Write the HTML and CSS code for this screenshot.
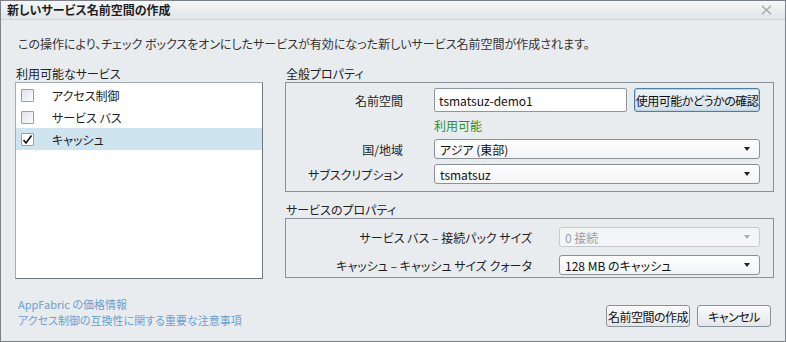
FILE: index.html
```html
<!DOCTYPE html>
<html>
<head>
    <title>新しいサービス名前空間の作成</title>
    <link rel="stylesheet" href="styles.css">
</head>
<body>
    <div class="dialog">
        <div class="titlebar">
            <span class="title">新しいサービス名前空間の作成</span>
            <svg class="close" width="11" height="10" viewBox="0 0 11 10">
                <path d="M1 1 L10 9 M10 1 L1 9" stroke="#a4a9ae" stroke-width="1.4" fill="none"/>
                <path d="M1 1 h2 M8 1 h2 M1 9 h2 M8 9 h2" stroke="#b8bcc0" stroke-width="1" fill="none"/>
            </svg>
        </div>
        <div class="content">
            <p class="intro">この操作により、チェック ボックスをオンにしたサービスが有効になった新しいサービス名前空間が作成されます。</p>
            <div class="columns">
                <div class="services">
                    <div class="caption">利用可能なサービス</div>
                    <ul class="service-list">
                        <li><span class="check"></span>アクセス制御</li>
                        <li><span class="check"></span>サービス バス</li>
                        <li class="selected">
                            <span class="check">
                                <svg width="11" height="11" viewBox="0 0 11 11"><path d="M1.5 6 L4 9 L9.5 1.5" stroke="#111" stroke-width="1.6" fill="none"/></svg>
                            </span>キャッシュ
                        </li>
                    </ul>
                </div>
                <div class="properties">
                    <div class="caption">全般プロパティ</div>
                    <div class="group general">
                        <div class="row">
                            <label class="label" for="ns">名前空間</label>
                            <div class="field">
                                <input type="text" id="ns" class="text-input" value="tsmatsuz-demo1">
                                <button class="button check-button">使用可能かどうかの確認</button>
                            </div>
                        </div>
                        <div class="row status">
                            <span class="label"></span>
                            <span class="available">利用可能</span>
                        </div>
                        <div class="row">
                            <span class="label">国/地域</span>
                            <div class="select">アジア (東部)</div>
                        </div>
                        <div class="row">
                            <span class="label">サブスクリプション</span>
                            <div class="select">tsmatsuz</div>
                        </div>
                    </div>
                    <div class="caption second">サービスのプロパティ</div>
                    <div class="group service">
                        <div class="row">
                            <span class="label">サービス バス – 接続パック サイズ</span>
                            <div class="select disabled">0 接続</div>
                        </div>
                        <div class="row">
                            <span class="label">キャッシュ – キャッシュ サイズ クォータ</span>
                            <div class="select">128 MB のキャッシュ</div>
                        </div>
                    </div>
                </div>
            </div>
            <div class="footer">
                <div class="links">
                    <a href="#">AppFabric の価格情報</a>
                    <a href="#">アクセス制御の互換性に関する重要な注意事項</a>
                </div>
                <div class="actions">
                    <button class="button create">名前空間の作成</button>
                    <button class="button cancel">キャンセル</button>
                </div>
            </div>
        </div>
    </div>
</body>
</html>
```

FILE: styles.css
```css
body {
    margin: 0;
    font-family: "Noto Sans CJK JP", sans-serif;
    font-size: 12px;
    font-feature-settings: "palt";
    color: #1e1e1e;
    background: #e9ecef;
}
.dialog {
    width: 786px;
    height: 342px;
    box-sizing: border-box;
    border: 1px solid #7b8186;
    background: #e9ecef;
}
.titlebar {
    height: 18px;
    display: flex;
    align-items: center;
    justify-content: space-between;
    padding: 0 13px 0 6px;
    background: linear-gradient(#f6f7f8, #e1e5e9);
    border-bottom: 1px solid #cdd3d8;
}
.title {
    font-weight: bold;
    line-height: 16px;
}
.close {
    display: block;
}
.content {
    padding: 0 11px 0 14px;
}
.intro {
    margin: 16px 0 0 3px;
    line-height: 16px;
    color: #333;
}
.columns {
    display: flex;
    gap: 22px;
    margin-top: 14px;
}
.services {
    width: 248px;
}
.properties {
    flex: 1;
}
.caption {
    line-height: 16px;
    padding-left: 1px;
    color: #222;
}
.caption.second {
    margin-top: 10px;
}
.service-list {
    list-style: none;
    margin: 0;
    padding: 1px 0 0;
    height: 197px;
    box-sizing: border-box;
    background: #fff;
    border: 1px solid #a5acb2;
    border-right-color: #6f767c;
    border-bottom-color: #6f767c;
}
.service-list li {
    height: 22px;
    display: flex;
    align-items: center;
    padding-left: 5px;
}
.service-list li.selected {
    background: #cee4ee;
}
.check {
    width: 13px;
    height: 13px;
    box-sizing: border-box;
    margin-right: 18px;
    border: 1px solid #959fa8;
    border-radius: 1px;
    background: linear-gradient(135deg, #dfe4e9, #fbfcfd);
    display: flex;
    align-items: center;
    justify-content: center;
}
.selected .check {
    background: #fff;
}
.check svg {
    display: block;
}
.group {
    border: 1px solid #8a9096;
    padding: 5px 13px 7px 0;
}
.group.service {
    padding: 8px 13px 2px 0;
}
.row {
    display: flex;
    align-items: center;
}
.label {
    width: 117px;
    margin-right: 31px;
    text-align: right;
    flex-shrink: 0;
}
.service .label {
    width: 246px;
    margin-right: 27px;
}
.general .row + .row {
    margin-top: 5px;
}
.general .row.status {
    height: 27px;
    margin-top: 0;
}
.general .row.status + .row {
    margin-top: 0;
}
.service .row + .row {
    margin-top: 8px;
}
.available {
    color: #2d912d;
}
.field {
    display: flex;
    gap: 7px;
    flex: 1;
}
.text-input {
    width: 193px;
    height: 24px;
    box-sizing: border-box;
    padding: 0 4px;
    border: 1px solid #8e969d;
    border-radius: 2px;
    font: inherit;
    color: #111;
    background: #fff;
}
.button {
    font: inherit;
    font-feature-settings: "palt";
    letter-spacing: -0.5px;
    white-space: nowrap;
    color: #111;
    height: 22px;
    padding: 0;
    border: 1px solid #8a9198;
    border-radius: 3px;
    background: linear-gradient(#fbfbfc, #e4e7ea);
    cursor: pointer;
}
.check-button {
    width: 126px;
    height: 24px;
    border-color: #4e7ea6;
    background: linear-gradient(#eef4f8, #d3dee7);
    box-shadow: inset 0 0 0 1px #b9d2e6;
}
.select {
    flex: 1;
    height: 20px;
    box-sizing: border-box;
    display: flex;
    align-items: center;
    justify-content: space-between;
    padding: 0 9px 0 5px;
    border: 1px solid #8a9298;
    border-radius: 3px;
    background: linear-gradient(#ffffff, #f2f4f6);
    color: #111;
}
.select::after {
    content: "";
    border-left: 3px solid transparent;
    border-right: 3px solid transparent;
    border-top: 4px solid #222;
}
.select.disabled {
    border-color: #c5cacf;
    background: #f3f5f7;
    color: #9a9fa4;
}
.select.disabled::after {
    border-top-color: #a8adb2;
}
.footer {
    display: flex;
    justify-content: space-between;
    margin-top: 17px;
}
.links {
    display: flex;
    flex-direction: column;
    padding-left: 3px;
}
.links a {
    color: #6a9fd2;
    text-decoration: none;
    font-size: 11px;
    line-height: 16px;
}
.actions {
    display: flex;
    gap: 7px;
    padding-top: 9px;
    margin-right: 3px;
}
.create {
    width: 84px;
}
.cancel {
    width: 74px;
}
```
